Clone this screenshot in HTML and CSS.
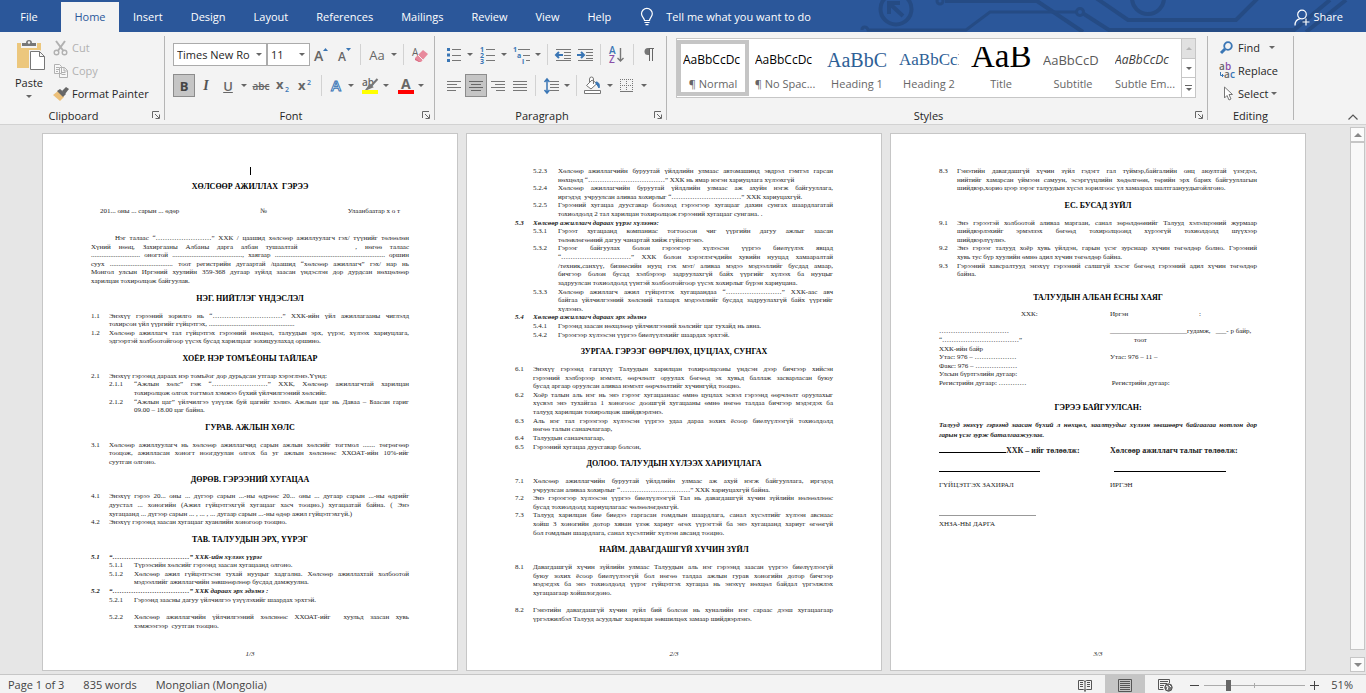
FILE: index.html
```html
<!DOCTYPE html>
<html lang="mn">
<head>
<meta charset="utf-8">
<title>Word</title>
<link rel="stylesheet" href="styles.css">
</head>
<body>
<div class="app">
<header class="tabs" lang="en">
  <nav class="tablist">
    <button class="tab tab-file">File</button>
    <button class="tab tab-active">Home</button>
    <button class="tab">Insert</button>
    <button class="tab">Design</button>
    <button class="tab">Layout</button>
    <button class="tab">References</button>
    <button class="tab">Mailings</button>
    <button class="tab">Review</button>
    <button class="tab">View</button>
    <button class="tab">Help</button>
  </nav>
  <button class="tellme">
    <svg width="14" height="18" viewBox="0 0 14 18" fill="none" stroke="#fff" stroke-width="1.2"><path d="M4.5 12.5C4.5 10 1.5 9 1.5 5.8a5.3 5.3 0 0 1 10.8 0C12.300 9 9.500 10 9.500 12.500zM4.500 14.500h5M5.500 16.700h3"/></svg>
    <span>Tell me what you want to do</span>
  </button>
  <div class="banner">
    <svg width="505" height="32" viewBox="-14 0 505 32" fill="none" stroke="#254b84" stroke-width="4">
      <circle cx="22" cy="9" r="15.500"/><path d="M29 16 16 4M15 14V3h11" stroke-width="4"/>
      <circle cx="66" cy="1" r="3" stroke-width="3"/><path d="M71 1h92l46 31" stroke-width="4"/>
      <path d="M-12 30c0-4 5-4 6 0h98l24-18h86" stroke-width="3"/><circle cx="206" cy="12" r="3.500" stroke-width="3"/><path d="M210 14l28 18M222 -2l32 22h108l22-22"/>
      <circle cx="274" cy="-2" r="16"/><path d="M236 30h184l36-30"/><path d="M432 32l40-32"/>
    </svg>
  </div>
  <button class="share">
    <svg width="16" height="17" viewBox="0 0 16 17" fill="none" stroke="#fff" stroke-width="1.200"><circle cx="8" cy="5.500" r="4.300"/><path d="M1 16.500c0-4 2.200-6.300 5.500-6.800M12 9.500v7M8.500 13h7"/></svg>
    <span>Share</span>
  </button>
</header>

<section class="ribbon" lang="en">
  <div class="group g-clip">
    <div class="clip">
      <button class="paste">
        <svg width="30" height="32" viewBox="0 0 30 32"><path d="M1 4h24v25H1z" fill="#ecc77d"/><path d="M5 3h16v6H5z" fill="#f3f3f3"/><path d="M6 4h4a3 3 0 0 1 6 0h4v3H6z" fill="#777"/><circle cx="13" cy="3.500" r="1.200" fill="#f3f3f3"/><path d="M14.500 12.500h9l5 5v13h-14z" fill="#fff" stroke="#f3f3f3" stroke-width="3"/><path d="M14.500 12.500h9l5 5v13h-14zM23.500 12.500v5h5" fill="#fff" stroke="#777"/></svg>
        <span>Paste</span><i class="arrow"></i>
      </button>
      <div class="cliplist">
        <button class="cmd off"><svg width="16" height="16" viewBox="0 0 16 16" fill="none" stroke="#b1b1b1" stroke-width="1.400"><path d="M3 1l7.500 10M12 1 4.800 11" stroke-width="2"/><circle cx="3.500" cy="12.500" r="2.300"/><circle cx="11.500" cy="12.500" r="2.300"/></svg><span>Cut</span></button>
        <button class="cmd off"><svg width="16" height="16" viewBox="0 0 16 16" fill="#f8f8f8" stroke="#b1b1b1"><path d="M1.500 1.500h5l2 2v7h-7zM3 4.500h3M3 6.500h3M3 8.500h2M6.500 4.500h5l3 3v7h-8zM11 4.500v3.500h3.500M8.500 9.500h4M8.500 11.500h4"/></svg><span>Copy</span></button>
        <button class="cmd"><svg width="16" height="16" viewBox="0 0 16 16"><path d="M0 9 5 5l6 6-4 4z" fill="#ecc07a"/><path d="M4 5l3-2 6 5-3 3z" fill="#666"/><path d="M9 5l4-4 3 2-4 5z" fill="#666"/></svg><span>Format Painter</span></button>
      </div>
    </div>
    <footer><span>Clipboard</span><button class="launch" aria-label="Clipboard settings"><svg width="8" height="8" viewBox="0 0 8 8" fill="none" stroke="#666"><path d="M.5 7V.5H7M3 3l4 4M7.500 3.500v4h-4"/></svg></button></footer>
  </div>

  <div class="group g-font">
    <div class="rows">
      <div class="row">
        <label class="combo combo-font"><select aria-label="Font"><option>Times New Ro</option></select></label>
        <label class="combo combo-size"><select aria-label="Font size"><option>11</option></select></label>
        <button class="ico w24" aria-label="Grow font"><svg width="16" height="18" viewBox="0 0 16 18"><text x="0" y="15" class="g-a">A</text><path d="M9 5h5l-2.500-3z" fill="#3a76b5"/></svg></button>
        <button class="ico w22" aria-label="Shrink font"><svg width="16" height="18" viewBox="0 0 16 18"><text x="1" y="15" class="g-as">A</text><path d="M9 2h5l-2.500 3z" fill="#3a76b5"/></svg></button>
        <i class="sep"></i>
        <button class="ico w24 glyph">Aa</button><button class="drop" aria-label="Case"><i class="arrow"></i></button>
        <i class="sep"></i>
        <button class="ico w24" aria-label="Clear formatting"><svg width="16" height="18" viewBox="0 0 16 18"><text x="0" y="10" class="g-ae">A</text><path d="M3 12 11 4l5 4-7 8H7z" fill="#e8899c"/><path d="M3 12l5 4H7l-4-2z" fill="#d8657c"/><path d="M6 9l5 5" stroke="#f3f3f3"/></svg></button>
      </div>
      <div class="row">
        <button class="ico w22 on glyph b">B</button>
        <button class="ico w22 glyph i">I</button>
        <button class="ico w22 glyph u">U</button><button class="drop" aria-label="Underline style"><i class="arrow"></i></button>
        <button class="ico w24 glyph s">abc</button>
        <button class="ico w22" aria-label="Subscript"><svg width="16" height="16" viewBox="0 0 16 16"><text x="0" y="11" class="g-x">x</text><text x="9" y="14" class="g-n">2</text></svg></button>
        <button class="ico w22" aria-label="Superscript"><svg width="16" height="16" viewBox="0 0 16 16"><text x="0" y="12" class="g-x">x</text><text x="9" y="7" class="g-n">2</text></svg></button>
        <i class="sep"></i>
        <button class="ico w20" aria-label="Text effects"><svg width="16" height="18" viewBox="0 0 16 18"><text x="3" y="14" class="g-fx">A</text></svg></button><button class="drop" aria-label="Effects"><i class="arrow"></i></button>
        <button class="ico w20 gap" aria-label="Highlight"><svg width="18" height="18" viewBox="0 0 18 18"><text x="0" y="9" class="g-ab">ab</text><path d="M15.500 2 8 10M5 12l3-4 2 2z" stroke="#777" stroke-width="2" fill="#777"/><path d="M0 13h16v4H0z" fill="#ff0"/></svg></button><button class="drop" aria-label="Highlight colour"><i class="arrow"></i></button>
        <button class="ico w20 gap" aria-label="Font colour"><svg width="16" height="18" viewBox="0 0 16 18"><text x="3" y="12" class="g-c">A</text><path d="M0 13h16v4H0z" fill="red"/></svg></button><button class="drop" aria-label="Colour"><i class="arrow"></i></button>
      </div>
    </div>
    <footer><span>Font</span><button class="launch" aria-label="Font settings"><svg width="8" height="8" viewBox="0 0 8 8" fill="none" stroke="#666"><path d="M.5 7V.5H7M3 3l4 4M7.500 3.500v4h-4"/></svg></button></footer>
  </div>

  <div class="group g-para">
    <div class="rows">
      <div class="row">
        <button class="ico w22" aria-label="Bullets"><svg width="14" height="16" viewBox="0 0 14 16"><path d="M0 1h3v3H0zM0 6.500h3v3H0zM0 12h3v3H0z" fill="#3a76b5"/><path d="M5 2.500h9M5 8.500h9M5 13.500h9" stroke="#777"/></svg></button><button class="drop" aria-label="Bullet style"><i class="arrow"></i></button>
        <button class="ico w24" aria-label="Numbering"><svg width="15" height="18" viewBox="0 0 15 18"><text x="0" y="6" class="g-num">1</text><text x="0" y="12" class="g-num">2</text><text x="0" y="18" class="g-num">3</text><path d="M6 3.500h9M6 9.500h9M6 14.500h9" stroke="#777"/></svg></button><button class="drop" aria-label="Number style"><i class="arrow"></i></button>
        <button class="ico w24" aria-label="Multilevel list"><svg width="17" height="18" viewBox="0 0 17 18"><text x="0" y="6" class="g-num">1</text><text x="4" y="12" class="g-num">a</text><text x="9" y="18" class="g-num">i</text><path d="M5 3.500h12M10 9.500h7M13 14.500h4" stroke="#777"/></svg></button><button class="drop" aria-label="List style"><i class="arrow"></i></button>
        <i class="sep"></i>
        <button class="ico w22" aria-label="Decrease indent"><svg width="16" height="14" viewBox="0 0 16 14" fill="none" stroke="#777"><path d="M1 1.500h15M9 4.500h7M9 7.500h7M9 10.500h7M1 12.500h15"/><path d="M8 7H1M4 4 1 7l3 3" stroke="#3a76b5" stroke-width="2"/></svg></button>
        <button class="ico w22" aria-label="Increase indent"><svg width="16" height="14" viewBox="0 0 16 14" fill="none" stroke="#777"><path d="M1 1.500h15M9 4.500h7M9 7.500h7M9 10.500h7M1 12.500h15"/><path d="M0 7h7M4 4l3 3-3 3" stroke="#3a76b5" stroke-width="2"/></svg></button>
        <i class="sep"></i>
        <button class="ico w24" aria-label="Sort"><svg width="16" height="18" viewBox="0 0 16 18"><text x="0" y="8" class="g-sa">A</text><text x="0" y="17" class="g-sz">Z</text><path d="M11.500 2v13M8.500 12l3 3 3-3" fill="none" stroke="#777" stroke-width="1.400"/></svg></button>
        <i class="sep"></i>
        <button class="ico w22" aria-label="Show marks"><svg width="12" height="14" viewBox="0 0 12 14"><path d="M5 0h6v1H5zM6 1h1v12H6zM9 1h1v12H9z" fill="#666"/><path d="M6 0H5a3.500 3.500 0 0 0 0 7h1z" fill="#777"/></svg></button>
      </div>
      <div class="row">
        <button class="ico w22" aria-label="Align left"><svg width="14" height="12" viewBox="0 0 14 12" stroke="#777"><path d="M0 1.500h14M0 4.500h10M0 7.500h14M0 10.500h9"/></svg></button>
        <button class="ico w22 on" aria-label="Centre"><svg width="14" height="12" viewBox="0 0 14 12" stroke="#666"><path d="M0 1.500h14M2 4.500h10M0 7.500h14M2 10.500h10"/></svg></button>
        <button class="ico w22" aria-label="Align right"><svg width="14" height="12" viewBox="0 0 14 12" stroke="#777"><path d="M0 1.500h14M4 4.500h10M0 7.500h14M5 10.500h9"/></svg></button>
        <button class="ico w22" aria-label="Justify"><svg width="14" height="12" viewBox="0 0 14 12" stroke="#777"><path d="M0 1.500h14M0 4.500h14M0 7.500h14M0 10.500h14"/></svg></button>
        <i class="sep"></i>
        <button class="ico w22" aria-label="Line spacing"><svg width="15" height="16" viewBox="0 0 15 16" fill="none" stroke="#777"><path d="M6 3.500h9M6 6.500h9M6 9.500h9M6 12.500h9"/><path d="M3 1v14M.5 4 3 1l2.500 3M.5 12 3 15l2.500-3" stroke="#3a76b5" stroke-width="1.500"/></svg></button><button class="drop" aria-label="Spacing"><i class="arrow"></i></button>
        <i class="sep"></i>
        <button class="ico w24" aria-label="Shading"><svg width="18" height="17" viewBox="0 0 18 17" fill="none" stroke="#777"><path d="M8 3 2.500 8.500 7 12l6-5.500zM5.500 5V2a2 2 0 0 1 4 0v5" fill="#fff"/><path d="M12 5c3 0 4 3 3 6-1-1-1-3-3-4z" fill="#3a76b5" stroke="#3a76b5"/><path d="M.5 13.500h16v3H.5z" fill="#fff"/></svg></button><button class="drop" aria-label="Shading colour"><i class="arrow"></i></button>
        <button class="ico w24" aria-label="Borders"><svg width="14" height="14" viewBox="0 0 14 14" stroke="#777" fill="none"><path d="M.5 0v12M6.500 0v12M12.500 0v12M0 .5h13M0 6.500h13" stroke-dasharray="1 1"/><path d="M0 12.500h13"/></svg></button><button class="drop" aria-label="Border style"><i class="arrow"></i></button>
      </div>
    </div>
    <footer><span>Paragraph</span><button class="launch" aria-label="Paragraph settings"><svg width="8" height="8" viewBox="0 0 8 8" fill="none" stroke="#666"><path d="M.5 7V.5H7M3 3l4 4M7.500 3.500v4h-4"/></svg></button></footer>
  </div>

  <div class="group g-styles">
    <div class="gallery">
      <button class="style chosen"><span class="pv">AaBbCcDc</span><span class="nm">¶ Normal</span></button>
      <button class="style"><span class="pv">AaBbCcDc</span><span class="nm">¶ No Spac...</span></button>
      <button class="style"><span class="pv pv-h1">AaBbC</span><span class="nm">Heading 1</span></button>
      <button class="style"><span class="pv pv-h2">AaBbCcI</span><span class="nm">Heading 2</span></button>
      <button class="style"><span class="pv pv-title">AaB</span><span class="nm">Title</span></button>
      <button class="style"><span class="pv pv-sub">AaBbCcD</span><span class="nm">Subtitle</span></button>
      <button class="style"><span class="pv pv-em">AaBbCcDc</span><span class="nm">Subtle Em...</span></button>
      <div class="galnav">
        <button class="dim" aria-label="Previous styles"><i class="arrow up"></i></button>
        <button aria-label="Next styles"><i class="arrow"></i></button>
        <button aria-label="More styles"><i class="bar"></i><i class="arrow"></i></button>
      </div>
    </div>
    <footer><span>Styles</span><button class="launch" aria-label="Style settings"><svg width="8" height="8" viewBox="0 0 8 8" fill="none" stroke="#666"><path d="M.5 7V.5H7M3 3l4 4M7.500 3.500v4h-4"/></svg></button></footer>
  </div>

  <div class="group g-edit">
    <div class="editlist">
      <button class="cmd"><svg width="16" height="14" viewBox="0 0 16 14" fill="none" stroke="#3a76b5"><circle cx="9" cy="5" r="3.800" stroke-width="1.800"/><path d="M6 8l-4 4" stroke-width="3"/></svg><span>Find</span><i class="arrow far"></i></button>
      <button class="cmd"><svg width="16" height="16" viewBox="0 0 16 16"><text x="0" y="7" class="g-r">a</text><text x="6" y="7" class="g-rp">b</text><text x="5" y="15" class="g-r">a</text><text x="11" y="15" class="g-rb">c</text><path d="M1.500 9v3.500H4M3 11l1.500 1.500L3 14" stroke="#3a76b5" fill="none"/></svg><span>Replace</span></button>
      <button class="cmd"><svg width="16" height="16" viewBox="0 0 16 16"><path d="M5.500 1v11l2.500-2.500 2 4.500 2-1-2-4.500h3.500z" fill="#fff" stroke="#777"/></svg><span>Select</span><i class="arrow"></i></button>
    </div>
    <footer><span>Editing</span></footer>
  </div>
  <button class="collapse" aria-label="Collapse the ribbon"><svg width="10" height="6" viewBox="0 0 10 6" fill="none" stroke="#555" stroke-width="1.200"><path d="M.5 5.500 5 1l4.500 4.500"/></svg></button>
</section>

<main class="work">
<div class="pages">
<article class="page">
  <p class="caret"><i></i></p>
  <h1>ХӨЛСӨӨР АЖИЛЛАХ &nbsp;ГЭРЭЭ</h1>
  <p class="meta"><span>201... оны ... сарын ... өдөр</span><span>№</span><span>Улаанбаатар х о т</span></p>
  <p class="intro"><span class="l ind">Нэг талаас “……………………” ХХК / цаашид хөлсөөр ажиллуулагч гэх/ түүнийг төлөөлөн</span><span class="l">Хүний нөөц, Захиргааны Албаны дарга албан тушаалтай <i class="void"></i>, нөгөө талаас</span><span class="l">............................ оногтой ........................................, хаягаар ............................................................... оршин</span><span class="l">суух .................................... тоот регистрийн дугаартай /цаашид “хөлсөөр ажиллагч” гэх/ нар нь</span><span class="l">Монгол улсын Иргэний хуулийн 359-368 дугаар зүйлд заасан үндэслэн дор дурдсан нөхцөлөөр</span>харилцан тохиролцож байгуулав.</p>
  <h2>НЭГ. НИЙТЛЭГ ҮНДЭСЛЭЛ</h2>
  <div class="it"><b>1.1</b><p><span class="l">Энэхүү гэрээний зорилго нь “…………………………” ХХК-ийн үйл ажиллагааны чиглэлд</span>тохирсон үйл үүргийг гүйцэтгэх, .................................................</p></div>
  <div class="it"><b>1.2</b><p><span class="l">Хөлсөөр ажиллагч тал гүйцэтгэх гэрээний нөхцөл, талуудын эрх, үүрэг, хүлээх хариуцлага,</span>эдгээртэй холбоотойгоор үүсэх бусад харилцааг зохицуулахад оршино.</p></div>
  <h2>ХОЁР. НЭР ТОМЪЁОНЫ ТАЙЛБАР</h2>
  <div class="it"><b>2.1</b><p>Энэхүү гэрээнд дараах нэр томъёог дор дурьдсан утгаар хэрэглэнэ.Үүнд:</p></div>
  <div class="it sub"><b>2.1.1</b><p><span class="l">“Ажлын хөлс” гэж “……………………” ХХК, Хөлсөөр ажиллагчтай харилцан</span>тохиролцож олгох тогтмол хэмжээ бүхий үйлчилгээний хөлсийг.</p></div>
  <div class="it sub"><b>2.1.2</b><p><span class="l">“Ажлын цаг” үйлчилгээ үзүүлж буй цагийг хэлнэ. Ажлын цаг нь Даваа – Баасан гариг</span>09.00 – 18.00 цаг байна.</p></div>
  <h2>ГУРАВ. АЖЛЫН ХӨЛС</h2>
  <div class="it"><b>3.1</b><p><span class="l">Хөлсөөр ажиллуулагч нь хөлсөөр ажиллагчид сарын ажлын хөлсийг тогтмол ....... төгрөгөөр</span><span class="l">тооцож, ажилласан хоногт ноогдуулан олгох ба уг ажлын хөлснөөс ХХОАТ-ийн 10%-ийг</span>суутган олгоно.</p></div>
  <h2>ДӨРӨВ. ГЭРЭЭНИЙ ХУГАЦАА</h2>
  <div class="it"><b>4.1</b><p><span class="l">Энэхүү гэрээ 20... оны ... дүгээр сарын ...-ны өдрөөс 20... оны ... дугаар сарын ...-ны өдрийг</span><span class="l">дуустал ... хоногийн (Ажил гүйцэтгэхгүй хугацааг хасч тооцно.) хугацаатай байна. ( Энэ</span>хугацаанд ... дүгээр сарын ... , ... , ... дугаар сарын ...-ны өдөр ажил гүйцэтгэхгүй.)</p></div>
  <div class="it"><b>4.2</b><p>Энэхүү гэрээнд заасан хугацааг хуанлийн хоногоор тооцно.</p></div>
  <h2>ТАВ. ТАЛУУДЫН ЭРХ, ҮҮРЭГ</h2>
  <div class="it em"><b>5.1</b><p>“……………………………” ХХК-ийн хүлээх үүрэг</p></div>
  <div class="it sub"><b>5.1.1</b><p>Түрээсийн хөлсийг гэрээнд заасан хугацаанд олгоно.</p></div>
  <div class="it sub"><b>5.1.2</b><p><span class="l">Хөлсөөр ажил гүйцэтгэсэн тухай нууцыг хадгална. Хөлсөөр ажиллахтай холбоотой</span>мэдээллийг ажиллагчийн зөвшөөрлөөр бусдад дамжуулна.</p></div>
  <div class="it em"><b>5.2</b><p>“……………………………” ХХК дараах эрх эдэлнэ :</p></div>
  <div class="it sub"><b>5.2.1</b><p>Гэрээнд заасны дагуу үйлчилгээ үзүүлэхийг шаардах эрхтэй.</p></div>
  <div class="it sub apart"><b>5.2.2</b><p><span class="l">Хөлсөөр ажиллагчийн үйлчилгээний хөлснөөс ХХОАТ-ийг &nbsp;хуульд заасан хувь</span>хэмжээгээр &nbsp;суутган тооцно.</p></div>
  <p class="folio">1/3</p>
</article>

<article class="page">
  <div class="it sub"><b>5.2.3</b><p><span class="l">Хөлсөөр ажиллагчийн буруутай үйлдлийн улмаас автомашинд эвдрэл гэмтэл гарсан</span>нөхцөлд “……………………………” ХХК нь ямар нэгэн хариуцлага хүлээхгүй</p></div>
  <div class="it sub"><b>5.2.4</b><p><span class="l">Хөлсөөр ажиллагчийн буруутай үйлдлийн улмаас аж ахуйн нэгж байгууллага,</span>иргэдэд &nbsp;учруулсан аливаа хохирлыг “…………………………” ХХК хариуцахгүй.</p></div>
  <div class="it sub"><b>5.2.5</b><p><span class="l">Гэрээний хугацаа дуусгавар болоход гэрээгээр хугацааг дахин сунгах шаардлагатай</span>тохиолдолд 2 тал харилцан тохиролцож гэрээний хугацааг сунгана. .</p></div>
  <div class="it em"><b>5.3</b><p>Хөлсөөр ажиллагч дараах үүрэг хүлээнэ:</p></div>
  <div class="it sub"><b>5.3.1</b><p><span class="l">Гэрээт хугацаанд компаниас тогтоосон чиг үүргийн дагуу ажлыг заасан</span>төлөвлөгөөний дагуу чанартай хийж гүйцэтгэнэ.</p></div>
  <div class="it sub"><b>5.3.2</b><p><span class="l">Гэрээг байгуулах болон гэрээгээр хүлээсэн үүргээ биелүүлэх явцад</span><span class="l">“…………………………” ХХК болон хэрэглэгчдийн хувийн нууцад хамааралтай</span><span class="l">/техник,санхүү, бизнесийн нууц гэх мэт/ аливаа мэдээ мэдээллийг бусдад амаар,</span><span class="l">бичгээр болон бусад хэлбэрээр задруулахгүй байх үүргийг хүлээх ба нууцыг</span>задруулсан тохиолдолд үүнтэй холбоотойгоор үүсэх хохирлыг бүрэн хариуцана.</p></div>
  <div class="it sub"><b>5.3.3</b><p><span class="l">Хөлсөөр ажиллагч ажил гүйцэтгэх хугацаандаа “……………………” ХХК-аас авч</span><span class="l">байгаа үйлчилгээний хөлсний талаарх мэдээллийг бусдад задруулахгүй байх үүргийг</span>хүлээнэ.</p></div>
  <div class="it em"><b>5.4</b><p>Хөлсөөр ажиллагч дараах эрх эдэлнэ</p></div>
  <div class="it sub"><b>5.4.1</b><p>Гэрээнд заасан нөхцлөөр үйлчилгээний хөлсийг цаг тухайд нь авна.</p></div>
  <div class="it sub"><b>5.4.2</b><p>Гэрээгээр хүлээсэн үүргээ биелүүлэхийг шаардах эрхтэй.</p></div>
  <h2>ЗУРГАА. ГЭРЭЭГ ӨӨРЧЛӨХ, ЦУЦЛАХ, СУНГАХ</h2>
  <div class="it"><b>6.1</b><p><span class="l">Энэхүү гэрээнд гагцхүү Талуудын харилцан тохиролцсоны үндсэн дээр бичгээр хийсэн</span><span class="l">гэрээний хэлбэрээр нэмэлт, өөрчлөлт оруулах бөгөөд эх хувьд баллаж засварласан буюу</span>бусад аргаар оруулсан аливаа нэмэлт өөрчлөлтийг хүчингүйд тооцно.</p></div>
  <div class="it"><b>6.2</b><p><span class="l">Хоёр талын аль нэг нь энэ гэрээг хугацаанаас өмнө цуцлах эсвэл гэрээнд өөрчлөлт оруулахыг</span><span class="l">хүсвэл энэ тухайгаа 1 хоногоос доошгүй хугацааны өмнө нөгөө талдаа бичгээр мэдэгдэх ба</span>талууд харилцан тохиролцож шийдвэрлэнэ.</p></div>
  <div class="it"><b>6.3</b><p><span class="l">Аль нэг тал гэрээгээр хүлээсэн үүргээ удаа дараа зохих ёсоор биелүүлээгүй тохиолдолд</span>нөгөө талын санаачлагаар,</p></div>
  <div class="it"><b>6.4</b><p>Талуудын санаачлагаар,</p></div>
  <div class="it"><b>6.5</b><p>Гэрээний хугацаа дуусгавар болсон,</p></div>
  <h2>ДОЛОО. ТАЛУУДЫН ХҮЛЭЭХ ХАРИУЦЛАГА</h2>
  <div class="it"><b>7.1</b><p><span class="l">Хөлсөөр ажиллагчийн буруутай үйлдлийн улмаас аж ахуй нэгж байгууллага, иргэдэд</span>учруулсан аливаа хохирлыг “…………………………” ХХК хариуцахгүй байна.</p></div>
  <div class="it"><b>7.2</b><p><span class="l">Энэ гэрээгээр хүлээсэн үүргээ биелүүлээгүй Тал нь давагдашгүй хүчин зүйлийн нөлөөллөөс</span>бусад тохиолдолд хариуцлагаас чөлөөлөгдөхгүй.</p></div>
  <div class="it"><b>7.3</b><p><span class="l">Талууд харилцан бие биедээ гаргасан гомдлын шаардлага, санал хүсэлтийг хүлээн авснаас</span><span class="l">хойш 3 хоногийн дотор хянан үзэж хариуг өгөх үүрэгтэй ба энэ хугацаанд хариуг өгөөгүй</span>бол гомдлын шаардлага, санал хүсэлтийг хүлээн авсанд тооцно.</p></div>
  <h2>НАЙМ. ДАВАГДАШГҮЙ ХҮЧИН ЗҮЙЛ</h2>
  <div class="it"><b>8.1</b><p><span class="l">Давагдашгүй хүчин зүйлийн улмаас Талуудын аль нэг гэрээнд заасан үүргээ биелүүлээгүй</span><span class="l">буюу зохих ёсоор биелүүлээгүй бол нөгөө талдаа ажлын гурав хоногийн дотор бичгээр</span><span class="l">мэдэгдэх ба энэ тохиолдолд үүрэг гүйцэтгэх хугацаа нь энэхүү нөхцөл байдал үргэлжлэх</span>хугацаагаар хойшлогдоно.</p></div>
  <div class="it apart"><b>8.2</b><p><span class="l">Гэнэтийн давагдашгүй хүчин зүйл бий болсон нь хуналийн нэг сараас дээш хугацаагаар</span>үргэлжилбэл Талууд асуудлыг харилцан зөвшилцөх замаар шийдвэрлэнэ.</p></div>
  <p class="folio">2/3</p>
</article>

<article class="page">
  <div class="it"><b>8.3</b><p><span class="l">Гэнэтийн давагдашгүй хүчин зүйл гэдэгт гал түймэр,байгалийн онц аюултай үзэгдэл,</span><span class="l">нийтийг хамарсан үймээн самуун, эсэргүүцлийн хөдөлгөөн, төрийн эрх барих байгууллагын</span>шийдвэр,хорио цээр зэрэг талуудын хүсэл зорилгоос үл хамаарах шалтгаануудыгойлгоно.</p></div>
  <h2>ЕС. БУСАД ЗҮЙЛ</h2>
  <div class="it"><b>9.1</b><p><span class="l">Энэ гэрээтэй холбоотой аливаа маргаан, санал зөрөлдөөнийг Талууд хэлэлцээний журмаар</span><span class="l">шийдвэрлэхийг эрмэлзэх бөгөөд тохиролцоонд хүрээгүй тохиолдолд шүүхээр</span>шийдвэрлүүлнэ.</p></div>
  <div class="it"><b>9.2</b><p><span class="l">Энэ гэрээг талууд хоёр хувь үйлдэн, гарын үсэг зурснаар хүчин төгөлдөр болно. Гэрээний</span>хувь тус бүр хуулийн өмнө адил хүчин төгөлдөр байна.</p></div>
  <div class="it"><b>9.3</b><p><span class="l">Гэрээний хавсралтууд энэхүү гэрээний салшгүй хэсэг бөгөөд гэрээний адил хүчин төгөлдөр</span>байна.</p></div>
  <h2 class="wide">ТАЛУУДЫН АЛБАН ЁСНЫ ХАЯГ</h2>
  <div class="cols who"><p>ХХК:</p><p class="pair"><span>Иргэн</span><span>:</span></p></div>
  <div class="cols addr">
    <p>…………………………<br>“……………………………”<br>ХХК-ийн байр<br>Утас: 976 – ………………<br>Факс: 976 – ………………<br>Улсын бүртгэлийн дугаар:<br>Регистрийн дугаар: …………</p>
    <p>______________________гудамж, &nbsp;&nbsp;___- р байр,<br><span class="door">тоот</span><br><br>Утас: 976 – 11 –<br><br><br>&nbsp;Регистрийн дугаар:</p>
  </div>
  <h2 class="made">ГЭРЭЭ БАЙГУУЛСАН:</h2>
  <p class="vow"><span class="l">Талууд энэхүү гэрээнд заасан бүхий л нөхцөл, заалтуудыг хүлээн зөвшөөрч байгаагаа нотлон дор</span>гарын үсэг зурж баталгаажуулав.</p>
  <div class="cols sign"><p><i class="rule r1"></i>ХХК – ийг төлөөлж:</p><p>Хөлсөөр ажиллагч талыг төлөөлж:</p></div>
  <div class="cols lines"><p><i class="rule r2"></i></p><p><i class="rule r3"></i></p></div>
  <div class="cols roles"><p>ГҮЙЦЭТГЭХ ЗАХИРАЛ</p><p>ИРГЭН</p></div>
  <p class="last"><i class="rule r4"></i></p>
  <p>ХНЗА-НЫ ДАРГА</p>
  <p class="folio">3/3</p>
</article>
</div>
<div class="scroll">
  <button aria-label="Scroll up"><i class="tri up"></i></button>
  <div class="thumb"></div>
  <button aria-label="Scroll down"><i class="tri"></i></button>
</div>
</main>

<footer class="status" lang="en">
  <span>Page 1 of 3</span><span>835 words</span><span>Mongolian (Mongolia)</span>
  <div class="views">
    <button aria-label="Read mode"><svg width="14" height="13" viewBox="0 0 14 13" fill="none" stroke="#555"><path d="M.5 1.500h5l1.500 1 1.500-1h5v9h-5l-1.500 1-1.500-1h-5zM7 2v11M2 3.500h3M2 5.500h3M2 7.500h3M9 3.500h3M9 5.500h3M9 7.500h3"/></svg></button>
    <button class="cur" aria-label="Print layout"><svg width="14" height="13" viewBox="0 0 14 13" fill="none" stroke="#555"><path d="M.5.500h13v12H.5zM2 2.500h10M2 4.500h10M2 6.500h10M2 8.500h10M2 10.500h10"/></svg></button>
    <button aria-label="Web layout"><svg width="15" height="13" viewBox="0 0 15 13" fill="none" stroke="#555"><path d="M11.500 4V.5H.5v10h5M2 2.500h8M2 4.500h7M2 6.500h4M2 8.500h3"/><circle cx="10.500" cy="8.500" r="3.700" fill="#777"/><path d="M8 7l2 1-1 3M11 6l2 2" stroke="#fff"/></svg></button>
  </div>
  <button class="zoomb" aria-label="Zoom out"><svg width="9" height="9" viewBox="0 0 9 9" stroke="#444"><path d="M0 4.500h9"/></svg></button>
  <input class="zoom" type="range" min="0" max="100" value="23" aria-label="Zoom">
  <button class="zoomb" aria-label="Zoom in"><svg width="9" height="9" viewBox="0 0 9 9" stroke="#444"><path d="M0 4.500h9M4.500 0v9"/></svg></button>
  <span class="pct">51%</span>
</footer>
</div>
</body>
</html>
```
FILE: styles.css
```css
* { box-sizing: border-box; }
body { margin: 0; font: 11px/16px "Open Sans", "Noto Sans", sans-serif; color: #262626; background: #e6e6e6; }
button { margin: 0; padding: 0; border: 0; background: none; font: inherit; color: inherit; }
svg { display: block; flex: none; overflow: visible; }
p, h1, h2 { margin: 0; }
.app { display: flex; flex-direction: column; height: 100vh; overflow: hidden; }

/* tab strip */
.tabs { display: flex; align-items: stretch; height: 32px; flex: none; background: #2b579a; color: #fff; overflow: hidden; }
.tablist { display: flex; padding-top: 2px; }
.tab { padding: 0 14px; height: 30px; }
.tab-file { width: 61px; padding: 0 3px 0 0; }
.tab-active { width: 58px; padding: 0; background: #f3f3f3; color: #2b579a; }
.tellme { display: flex; align-items: center; gap: 12px; padding: 2px 0 0 15px; white-space: nowrap; }
.banner { flex: 1; overflow: hidden; display: flex; justify-content: flex-end; min-width: 0; margin-right: -71px; }
.share { display: flex; align-items: center; gap: 3px; padding: 2px 23px 0 0; position: relative; }

/* ribbon */
.ribbon { display: flex; flex: none; height: 93px; padding: 4px 0; background: #f3f3f3; border-bottom: 1px solid #d2d2d2; }
.group { display: flex; flex-direction: column; justify-content: space-between; border-right: 1px solid #b5b5b5; flex: none; }
.group footer { display: flex; position: relative; justify-content: center; height: 12px; line-height: 16px; }
.launch { position: absolute; right: 4px; top: 3px; }
.g-clip { width: 165px; }
.g-clip footer { padding-right: 17px; }
.g-font { width: 270px; }
.g-font footer { padding-right: 17px; }
.g-para { width: 232px; }
.g-para footer { padding-right: 17px; }
.g-styles { flex: 1; min-width: 0; }
.g-styles footer { padding-right: 17px; }
.g-edit { width: 86px; }
.arrow { display: block; flex: none; border: 3px solid transparent; border-top-color: #666; border-bottom: 0; }
.arrow.up { border-top: 0; border-bottom: 3px solid #b5b5b5; }
.clip { display: flex; }
.paste { display: flex; flex-direction: column; align-items: center; gap: 4px; width: 53px; padding: 3px 0 0 5px; }
.paste svg { margin-left: 4px; }
.cmd { display: flex; align-items: center; gap: 3px; height: 23px; white-space: nowrap; }
.cmd.off { color: #b1b1b1; }
.rows { display: flex; flex-direction: column; gap: 8px; padding: 7px 0 0 8px; }
.row { display: flex; align-items: center; height: 23px; }
.combo { position: relative; }
.combo::after { content: ""; position: absolute; right: 5px; top: 10px; border: 3px solid transparent; border-top-color: #666; border-bottom: 0; pointer-events: none; }
.combo select { appearance: none; width: 100%; height: 23px; border: 1px solid #ababab; border-radius: 0; background: #fff; padding: 0 3px; font: inherit; color: #262626; }
.combo-font { width: 94px; }
.combo-size { width: 43px; }
.ico { display: flex; align-items: center; justify-content: center; height: 23px; flex: none; }
.w20 { width: 20px; }
.w22 { width: 22px; }
.w24 { width: 24px; }
.gap { margin-left: 5px; }
.on { background: #c5c5c5; border: 1px solid #8c8c8c; }
.drop { display: flex; align-items: center; justify-content: center; width: 10px; height: 23px; }
.sep { width: 1px; height: 21px; margin: 0 4px; background: #d2d2d2; }
.glyph { font-size: 13px; color: #666; }
.b { font-weight: 700; color: #444; }
.i { font: italic 700 14px/16px "Liberation Serif", serif; color: #555; }
.u { font-weight: 600; text-decoration: underline; }
.s { font-size: 10px; font-weight: 600; text-decoration: line-through; }
.row text { font-family: "Open Sans", sans-serif; fill: #666; }
.g-a { font-size: 14px; font-weight: 600; }
.g-as { font-size: 12px; font-weight: 600; }
.g-ae { font-size: 10px; }
.g-x { font-size: 13px; font-weight: 700; }
.row .g-n { font-size: 7px; font-weight: 600; fill: #3a76b5; }
.row .g-fx { font-size: 15px; font-weight: 600; fill: #fff; stroke: #3a76b5; stroke-width: 1px; }
.g-ab { font-size: 10px; font-weight: 600; }
.g-c { font-size: 14px; font-weight: 700; }
.row .g-num { font-size: 7px; font-weight: 700; fill: #3a76b5; }
.row .g-sa { font-size: 10px; font-weight: 600; fill: #3a76b5; }
.row .g-sz { font-size: 10px; font-weight: 600; fill: #8a4fa8; }
.g-r, .g-rp, .g-rb { font: 600 10px "Open Sans", sans-serif; fill: #666; }
.g-rp { fill: #8a4fa8; }
.g-rb { fill: #3a76b5; }
.gallery { display: flex; margin: 2px 11px 0 9px; height: 60px; background: #fff; border: 1px solid #c6c6c6; overflow: hidden; }
.style { display: flex; flex-direction: column; align-items: center; justify-content: flex-start; flex: 0 0 72px; margin: 1px 0; padding-top: 7px; color: #666; overflow: hidden; }
.chosen { border: 4px solid #c5c5c5; padding-top: 3px; }
.pv { flex: none; width: 60px; height: 26px; font-size: 12px; line-height: 26px; overflow: hidden; white-space: nowrap; color: #000; text-align: left; }
.pv-h1 { font-family: "Liberation Serif", serif; font-size: 20px; color: #2e6096; }
.pv-h2 { font-family: "Liberation Serif", serif; font-size: 17px; color: #2e6096; }
.pv-title { font-family: "Liberation Serif", serif; font-size: 33px; line-height: 18px; }
.pv-sub { font-size: 13px; color: #5a5a5a; }
.pv-em { font-style: italic; color: #404040; }
.nm { white-space: nowrap; line-height: 14px; margin-top: 4px; }
.galnav { display: flex; flex-direction: column; margin-left: auto; width: 14px; border-left: 1px solid #c6c6c6; }
.galnav button { flex: 1; display: flex; flex-direction: column; align-items: center; justify-content: center; gap: 2px; border-bottom: 1px solid #c6c6c6; }
.galnav button:last-child { border-bottom: 0; }
.galnav .dim { background: #e1e1e1; }
.bar { width: 7px; height: 1px; background: #666; }
.editlist { padding-left: 11px; }
.far { margin-left: 6px; }
.collapse { display: flex; align-items: flex-end; padding: 0 8px 0 54px; }

/* document area */
.work { flex: 1; min-height: 0; display: flex; background: #e6e6e6; overflow: hidden; }
.pages { flex: 1; min-width: 0; display: flex; justify-content: center; align-items: flex-start; gap: 8px; padding-top: 8px; }
.page { flex: 0 1 416px; min-width: 0; aspect-ratio: 17 / 22; display: flex; flex-direction: column; padding: 33px 48px 12px; border: 1px solid #c6c6c6; background: #fff; font: 7px/1.23 "Liberation Serif", serif; color: #1c1c1c; }
.page h1, .page h2 { font-size: 8px; font-weight: 700; text-align: center; color: #000; white-space: nowrap; }
.page h1 { margin: 4px 0 16px; }
.page h2 { margin: 8px 0; }
.page .wide { margin: 14px 0 7px; }
.page .made { margin: 15px 0 8px; }
.l { display: block; text-align-last: justify; white-space: nowrap; }
.ind { padding-left: 24px; }
.void { display: inline-block; width: 50px; }
.caret { text-align: center; }
.caret i { display: inline-block; width: 1px; height: 8px; background: #000; }
.meta { display: flex; justify-content: space-between; padding: 0 9px; margin-bottom: 18px; }
.it { display: flex; }
.it b { font-weight: 400; flex: 0 0 18px; }
.it p { flex: 1; min-width: 0; }
.sub { padding-left: 18px; }
.sub b { flex-basis: 25px; }
.em, .em b { font-style: italic; font-weight: 700; }
.apart { margin-top: 9px; }
.folio { margin-top: auto; text-align: center; font-style: italic; }
.cols { display: grid; grid-template-columns: 171px 1fr; }
.who p:first-child { padding-left: 82px; }
.pair { display: grid; grid-template-columns: 89px 1fr; }
.addr { margin-top: 9px; white-space: nowrap; }
.door { padding-left: 24px; }
.vow { line-height: 10px; font-style: italic; font-weight: 700; }
.sign { margin-top: 6px; font-size: 8px; font-weight: 700; white-space: nowrap; }
.rule { display: inline-block; border-bottom: 1px solid #000; }
.r1 { width: 67px; }
.r2 { width: 101px; }
.r3 { width: 112px; margin-left: 4px; }
.r4 { width: 97px; border-color: #999; }
.lines { margin-top: 10px; }
.roles { margin-top: 6px; }
.last { margin: 20px 0 2px; }

/* vertical scroll bar */
.scroll { display: flex; flex-direction: column; flex: none; width: 16px; margin: 2px 0 2px 2px; }
.scroll button { display: flex; align-items: center; justify-content: center; width: 15px; height: 15px; background: #fbfbfb; border: 1px solid #c6c6c6; }
.thumb { flex: 1; width: 15px; margin: 0 0 7px; background: #f9f9f9; border: 1px solid #c6c6c6; }
.tri { border: 4px solid transparent; border-top-color: #888; border-bottom: 0; }
.tri.up { border-top: 0; border-bottom: 4px solid #888; }

/* status bar */
.status { display: flex; align-items: center; flex: none; height: 19px; padding: 2px 13px 0 8px; background: #f3f3f3; border-top: 1px solid #c6c6c6; gap: 19px; white-space: nowrap; color: #444; }
.views { display: flex; margin-left: auto; align-self: stretch; margin-top: -2px; }
.views button { display: flex; align-items: center; justify-content: center; width: 40px; padding-top: 2px; }
.views .cur { background: #c5c5c5; }
.zoomb { margin: 0 -14px; }
.zoom { appearance: none; width: 101px; height: 16px; margin: 0; background: linear-gradient(#ababab, #ababab) center / 100% 1px no-repeat, linear-gradient(#ababab, #ababab) center / 1px 5px no-repeat; }
.zoom::-webkit-slider-thumb { appearance: none; width: 5px; height: 11px; background: #666; }
.pct { margin-left: 7px; }
```
